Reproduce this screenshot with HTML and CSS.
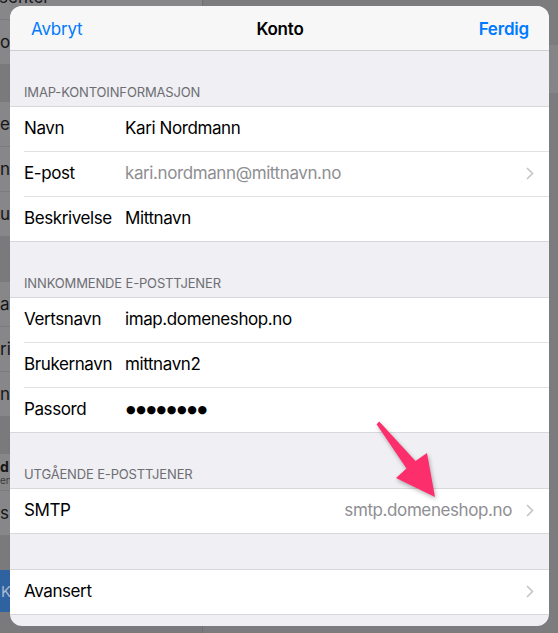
FILE: index.html
```html
<!DOCTYPE html>
<html lang="nb">
	<head>
		<meta charset="UTF-8" />
		<meta name="viewport" content="width=device-width, initial-scale=1.0" />
		<title>Konto</title>
		<link rel="stylesheet" href="styles.css">
	</head>

	<body>
		<div class="backdrop">
			<div class="sidebar">
				<div class="bg-row bg-top"><span>Kontrollsenter</span></div>
				<div class="bg-row"><span>or</span></div>
				<div class="bg-gap"></div>
				<div class="bg-row"><span>e</span></div>
				<div class="bg-row"><span>n</span></div>
				<div class="bg-row"><span>u</span></div>
				<div class="bg-gap bg-gap-wide"></div>
				<div class="bg-row"><span>a I</span></div>
				<div class="bg-row"><span>ri</span></div>
				<div class="bg-row"><span>nv</span></div>
				<div class="bg-gap"></div>
				<div class="bg-row bg-double"><b>d</b><small>en</small></div>
				<div class="bg-row"><span>s</span></div>
				<div class="bg-gap bg-gap-short"></div>
				<div class="bg-button">KO</div>
			</div>
			<div class="detail">
				<div class="detail-band"></div>
			</div>
		</div>

		<div class="sheet">
			<div class="navbar">
				<span class="nav-left">Avbryt</span>
				<span class="nav-title">Konto</span>
				<span class="nav-right">Ferdig</span>
			</div>

			<div class="section-header">IMAP-KONTOINFORMASJON</div>
			<div class="group">
				<div class="row">
					<div class="row-body">
						<span class="label">Navn</span>
						<span class="value">Kari Nordmann</span>
					</div>
				</div>
				<div class="row">
					<div class="row-body">
						<span class="label">E-post</span>
						<span class="value muted">kari.nordmann@mittnavn.no</span>
						<svg class="chevron" viewBox="0 0 8 13"><polyline points="1,1 6.5,6.5 1,12" /></svg>
					</div>
				</div>
				<div class="row">
					<div class="row-body">
						<span class="label">Beskrivelse</span>
						<span class="value">Mittnavn</span>
					</div>
				</div>
			</div>

			<div class="section-header">INNKOMMENDE E-POSTTJENER</div>
			<div class="group">
				<div class="row">
					<div class="row-body">
						<span class="label">Vertsnavn</span>
						<span class="value">imap.domeneshop.no</span>
					</div>
				</div>
				<div class="row">
					<div class="row-body">
						<span class="label">Brukernavn</span>
						<span class="value">mittnavn2</span>
					</div>
				</div>
				<div class="row">
					<div class="row-body">
						<span class="label">Passord</span>
						<span class="value dots">●●●●●●●●</span>
					</div>
				</div>
			</div>

			<div class="section-header">UTGÅENDE E-POSTTJENER</div>
			<div class="group">
				<div class="row">
					<div class="row-body">
						<span class="label">SMTP</span>
						<span class="value muted push">smtp.domeneshop.no</span>
						<svg class="chevron" viewBox="0 0 8 13"><polyline points="1,1 6.5,6.5 1,12" /></svg>
					</div>
				</div>
			</div>

			<div class="spacer"></div>
			<div class="group">
				<div class="row">
					<div class="row-body">
						<span class="label">Avansert</span>
						<svg class="chevron push" viewBox="0 0 8 13"><polyline points="1,1 6.5,6.5 1,12" /></svg>
					</div>
				</div>
			</div>
		</div>

		<!-- annotation arrow -->
		<svg class="arrow" viewBox="0 0 558 633">
			<polygon points="379.2,421.6 415.5,461 427,453 435,497 396,478 406.5,468.5 376.6,424.2" />
		</svg>
	</body>
</html>
```

FILE: styles.css
```css
:root {
	--blue: #007aff;
	--group-bg: #efeff4;
	--nav-bg: #f7f7f7;
	--border: #d8d8dc;
	--separator: #e2e2e5;
	--header-text: #6d6d72;
	--muted: #8e8e93;
	--chevron: #c4c4c9;
	--dim-row: #87878a;
	--dim-gap: #7a7a7c;
}

* {
	box-sizing: border-box;
}

body {
	margin: 0;
	width: 558px;
	height: 633px;
	overflow: hidden;
	position: relative;
	font-family: "Inter", "Liberation Sans", sans-serif;
	background-color: var(--dim-gap);
}

/* dimmed split view behind the sheet */
.backdrop {
	display: flex;
	height: 100%;
}

.sidebar {
	width: 203px;
	border-right: 1px solid #6f6f71;
	display: flex;
	flex-direction: column;
}

.bg-row {
	height: 45px;
	flex-shrink: 0;
	background-color: var(--dim-row);
	border-bottom: 1px solid #7b7b7d;
	display: flex;
	align-items: center;
	font-size: 17px;
	color: #161616;
	white-space: nowrap;
}

.bg-top {
	height: 20px;
	align-items: flex-start;
	overflow: hidden;
}

.bg-top span {
	margin-top: -13px;
	margin-left: -62px;
}

.bg-double {
	height: 37px;
	flex-direction: column;
	align-items: flex-start;
	justify-content: center;
}

.bg-double b {
	font-size: 14px;
	line-height: 15px;
}

.bg-double small {
	font-size: 10px;
	line-height: 12px;
	color: #3a3a3c;
}

.bg-gap {
	height: 37px;
	flex-shrink: 0;
}

.bg-gap-wide {
	height: 45px;
}

.bg-gap-short {
	height: 34px;
}

.bg-button {
	height: 42px;
	background-color: #2f62a0;
	color: #a9b9cf;
	font-size: 15px;
	display: flex;
	align-items: center;
	padding-left: 1px;
}

.detail {
	flex: 1;
	background-color: #7c7c7e;
	padding-top: 45px;
}

.detail-band {
	height: 48px;
	background-color: #858587;
}

/* the sheet */
.sheet {
	position: absolute;
	top: 6px;
	left: 10px;
	width: 539px;
	height: 620px;
	border-radius: 12px;
	overflow: hidden;
	background-color: var(--group-bg);
	display: flex;
	flex-direction: column;
}

.navbar {
	height: 45px;
	flex-shrink: 0;
	background-color: var(--nav-bg);
	border-bottom: 1px solid #cfcfd3;
	display: grid;
	grid-template-columns: 1fr auto 1fr;
	align-items: center;
	padding: 1px 20px 0 21px;
	font-size: 17px;
	letter-spacing: -0.2px;
}

.nav-left {
	color: var(--blue);
}

.nav-title {
	font-weight: 600;
	color: #000;
}

.nav-right {
	justify-self: end;
	color: var(--blue);
	font-weight: 600;
}

.section-header {
	height: 55px;
	flex-shrink: 0;
	display: flex;
	align-items: flex-end;
	padding: 0 14px 6px;
	font-size: 13px;
	line-height: 16px;
	letter-spacing: -0.15px;
	color: var(--header-text);
}

.spacer {
	height: 35px;
	flex-shrink: 0;
}

.group {
	background-color: #fff;
	border-top: 1px solid var(--border);
	border-bottom: 1px solid var(--border);
	flex-shrink: 0;
}

.row {
	padding-left: 14px;
}

.row-body {
	height: 45px;
	display: flex;
	align-items: center;
	padding-right: 15px;
	padding-bottom: 2px;
	border-bottom: 1px solid var(--separator);
	font-size: 17px;
	letter-spacing: -0.4px;
	color: #000;
}

.row:last-child .row-body {
	height: 44px;
	border-bottom: none;
}

.label {
	width: 101px;
	flex-shrink: 0;
}

.value.muted {
	color: var(--muted);
}

.dots {
	font-family: "DejaVu Sans", sans-serif;
	font-size: 11px;
	letter-spacing: 0.6px;
	padding-left: 1px;
}

.push {
	margin-left: auto;
}

.chevron {
	width: 8px;
	height: 13px;
	margin-left: auto;
	flex-shrink: 0;
	fill: none;
	stroke: var(--chevron);
	stroke-width: 1.6;
}

.value.push + .chevron {
	margin-left: 14px;
}

.arrow {
	position: absolute;
	top: 0;
	left: 0;
	width: 558px;
	height: 633px;
	pointer-events: none;
}

.arrow polygon {
	fill: #fd2e6c;
	filter: drop-shadow(1px 2px 2px rgba(0, 0, 0, 0.3));
}
```
